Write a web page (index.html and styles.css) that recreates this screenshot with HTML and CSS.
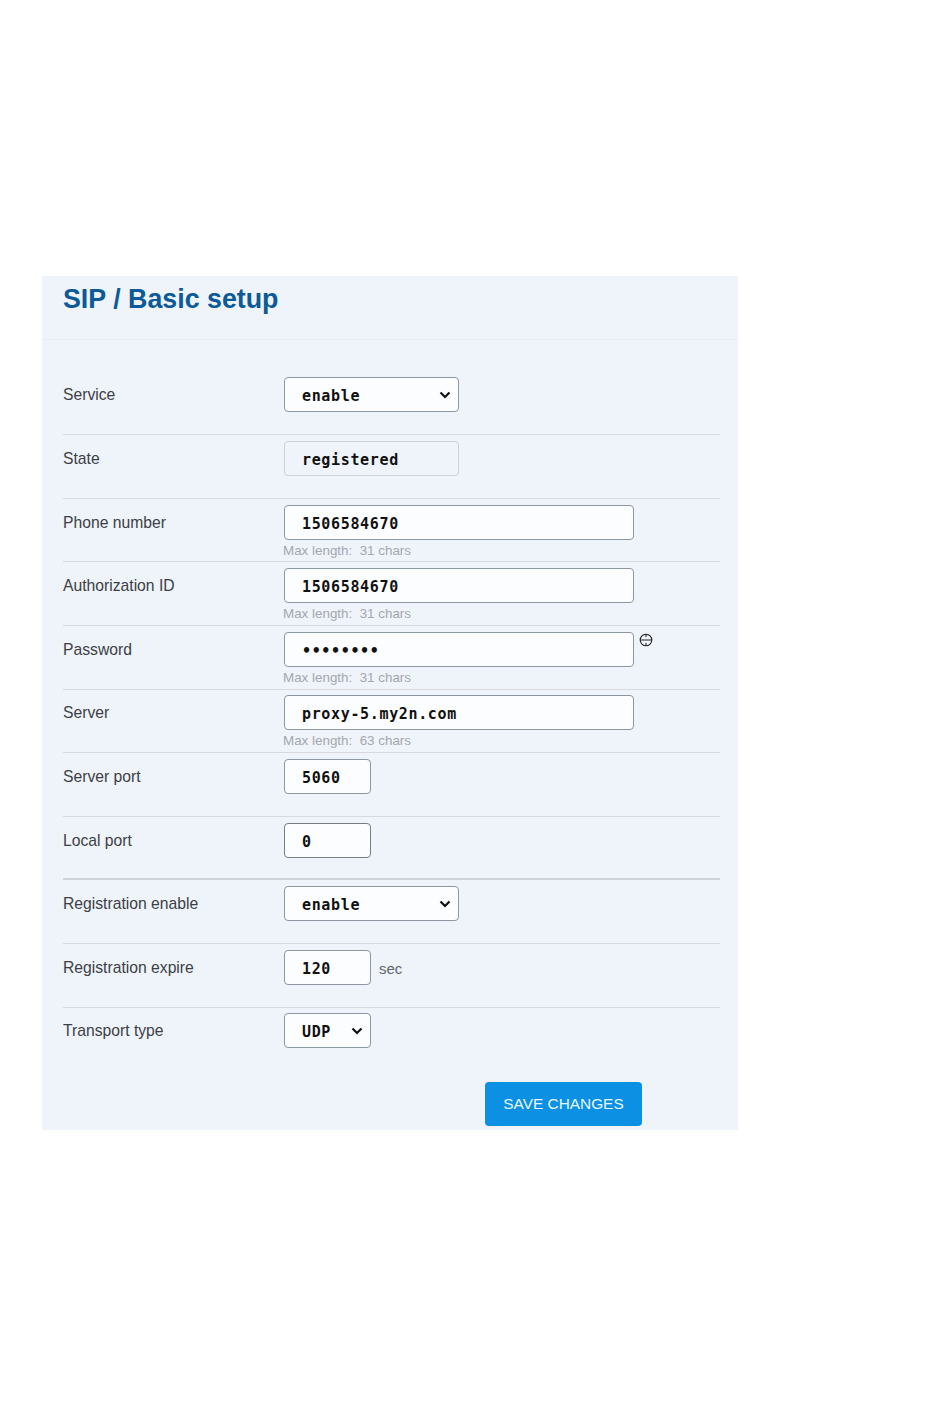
FILE: index.html
```html
<!DOCTYPE html>
<html lang="en">
<head>
<meta charset="utf-8">
<title>SIP / Basic setup</title>
<link rel="stylesheet" href="styles.css">
</head>
<body>
<main class="panel">
  <header class="panel-head"><h1 class="title">SIP / Basic setup</h1></header>
  <form class="rows">
    <div class="row"><span class="label">Service</span><div class="field"><div class="select-wrap"><select class="ctl ctl-m"><option>enable</option></select><svg class="chev" viewBox="0 0 12 8" width="12" height="8" aria-hidden="true"><path d="M1.5 1.5L6 6L10.5 1.5"/></svg></div></div></div>
    <div class="row"><span class="label">State</span><div class="field"><input class="ctl ctl-m ctl-ro" value="registered" readonly></div></div>
    <div class="row"><span class="label">Phone number</span><div class="field"><input class="ctl ctl-l" value="1506584670"><small class="hint">Max length:&nbsp; 31 chars</small></div></div>
    <div class="row"><span class="label">Authorization ID</span><div class="field"><input class="ctl ctl-l" value="1506584670"><small class="hint">Max length:&nbsp; 31 chars</small></div></div>
    <div class="row"><span class="label">Password</span><div class="field"><div class="with-eye"><input class="ctl ctl-l" type="password" value="12345678"><svg class="eye" viewBox="0 0 14 14" width="14" height="14" aria-hidden="true"><circle cx="7" cy="7" r="5.8"/><path d="M1 7H13M7 1V4M7 10V13"/></svg></div><small class="hint">Max length:&nbsp; 31 chars</small></div></div>
    <div class="row"><span class="label">Server</span><div class="field"><input class="ctl ctl-l" value="proxy-5.my2n.com"><small class="hint">Max length:&nbsp; 63 chars</small></div></div>
    <div class="row"><span class="label">Server port</span><div class="field"><input class="ctl ctl-s" value="5060"></div></div>
    <div class="row row-strong"><span class="label">Local port</span><div class="field"><input class="ctl ctl-s ctl-dark" value="0"></div></div>
    <div class="row"><span class="label">Registration enable</span><div class="field"><div class="select-wrap"><select class="ctl ctl-m"><option>enable</option></select><svg class="chev" viewBox="0 0 12 8" width="12" height="8" aria-hidden="true"><path d="M1.5 1.5L6 6L10.5 1.5"/></svg></div></div></div>
    <div class="row"><span class="label">Registration expire</span><div class="field field-inline"><input class="ctl ctl-s" value="120"><span class="unit">sec</span></div></div>
    <div class="row row-last"><span class="label">Transport type</span><div class="field"><div class="select-wrap"><select class="ctl ctl-s"><option>UDP</option></select><svg class="chev" viewBox="0 0 12 8" width="12" height="8" aria-hidden="true"><path d="M1.5 1.5L6 6L10.5 1.5"/></svg></div></div></div>
    <div class="actions"><button class="save" type="button">SAVE CHANGES</button></div>
  </form>
</main>
</body>
</html>
```
FILE: styles.css
```css
* { box-sizing: border-box; }
html, body { margin: 0; background: #fff; }
body { padding: 276px 212px 278px 42px; font-family: "Liberation Sans", Arial, sans-serif; }
.panel { background: #eff3fa; height: 854px; }
.panel-head { height: 64px; padding: 8px 21px 0; border-bottom: 1px solid #e9edf4; }
.title { margin: 0; font-size: 26.8px; line-height: 31px; font-weight: 700; color: #0c5a97; }
.rows { padding: 31.7px 18px 0 21px; }
.row { display: grid; grid-template-columns: 221px 1fr; height: 63.6px; border-bottom: 1px solid #d6dae0; padding-top: 5.7px; }
.row-strong { border-bottom: 2px solid #cfd3d9; }
.row-last { border-bottom: 0; }
.label { font-size: 15.7px; line-height: 22px; padding-top: 7px; color: #3c3f44; }
.field { display: flex; flex-direction: column; align-items: flex-start; }
.field-inline { flex-direction: row; }
.with-eye { display: flex; align-items: flex-start; }
.select-wrap { position: relative; display: flex; }
.chev { position: absolute; right: 8px; top: 14px; fill: none; stroke: #111; stroke-width: 2.2; pointer-events: none; }
.ctl { height: 35px; margin: 0; border: 1px solid #8d96a3; border-radius: 4px; background: #fcfdfe; padding: 3px 0 0 17px; font: 700 15px/1 "DejaVu Sans Mono", monospace; letter-spacing: 0.65px; color: #111; outline: 0; }
select.ctl { appearance: none; }
.ctl-s { width: 87px; }
.ctl-m { width: 175px; }
.ctl-l { width: 350px; }
.ctl-ro { background: #eff3fa; border-color: #ccd2da; }
.ctl-dark { border-color: #757d88; }
.eye { margin: 1px 0 0 5px; fill: none; stroke: #222; stroke-width: 1.1; }
.hint { margin: 3px 0 0 -1px; font-size: 13.4px; line-height: 16px; color: #a4a8ae; }
.unit { margin-left: 8px; padding-top: 10px; font-size: 15px; line-height: 18px; color: #62666c; }
.actions { display: flex; padding: 10.3px 0 0 422px; }
.save { width: 157px; height: 44px; border: 0; border-radius: 4px; background: #0c90e4; color: #e8f8ff; font: 400 15.4px "Liberation Sans", Arial, sans-serif; }
```
